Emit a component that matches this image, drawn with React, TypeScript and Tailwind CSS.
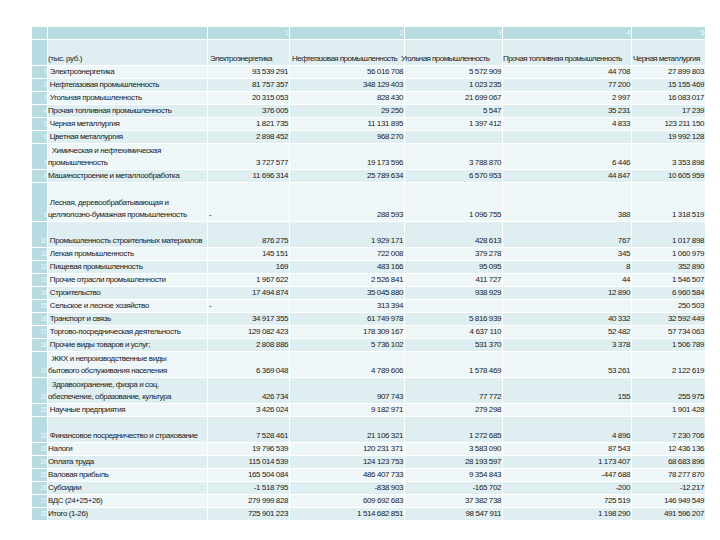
import React from 'react';

type Row = {
  n: number;
  label: string[];
  values: string[];
  units?: 1 | 2 | 3;
};

const rows: Row[] = [
  { n: 1, label: [' Электроэнергетика'], values: ['93 539 291', '56 016 708', '5 572 909', '44 708', '27 899 803'] },
  { n: 2, label: [' Нефтегазовая промышленность'], values: ['81 757 357', '348 129 403', '1 023 235', '77 200', '15 155 469'] },
  { n: 3, label: [' Угольная промышленность'], values: ['20 315 053', '828 430', '21 699 067', '2 997', '16 083 017'] },
  { n: 4, label: ['Прочая топливная промышленность'], values: ['376 005', '29 250', '5 547', '35 231', '17 239'] },
  { n: 5, label: [' Черная металлургия'], values: ['1 821 735', '11 131 895', '1 397 412', '4 833', '123 211 150'] },
  { n: 6, label: [' Цветная металлургия'], values: ['2 898 452', '968 270', '', '', '19 992 128'] },
  { n: 7, label: ['  Химическая и нефтехимическая', 'промышленность'], values: ['3 727 577', '19 173 596', '3 788 870', '6 446', '3 353 898'], units: 2 },
  { n: 8, label: ['Машиностроение и металлообработка'], values: ['11 696 314', '25 789 634', '6 570 953', '44 847', '10 605 959'] },
  { n: 9, label: [' Лесная, деревообрабатывающая и', 'целлюлозно-бумажная промышленность'], values: ['-', '288 593', '1 096 755', '388', '1 318 519'], units: 3 },
  { n: 10, label: [' Промышленность строительных материалов'], values: ['876 275', '1 929 171', '428 613', '767', '1 017 898'], units: 2 },
  { n: 11, label: [' Легкая промышленность'], values: ['145 151', '722 008', '379 278', '345', '1 060 979'] },
  { n: 12, label: [' Пищевая промышленность'], values: ['169', '483 166', '95 095', '8', '352 890'] },
  { n: 13, label: [' Прочие отрасли промышленности'], values: ['1 967 622', '2 526 841', '411 727', '44', '1 546 507'] },
  { n: 14, label: [' Строительство'], values: ['17 494 874', '35 045 880', '938 929', '12 890', '6 960 584'] },
  { n: 15, label: [' Сельское и лесное хозяйство'], values: ['-', '313 394', '', '', '250 503'] },
  { n: 16, label: [' Транспорт и связь'], values: ['34 917 355', '61 749 978', '5 816 939', '40 332', '32 592 449'] },
  { n: 17, label: [' Торгово-посредническая деятельность'], values: ['129 082 423', '178 309 167', '4 637 110', '52 482', '57 734 063'] },
  { n: 18, label: [' Прочие виды товаров и услуг;'], values: ['2 808 886', '5 736 102', '531 370', '3 378', '1 506 789'] },
  { n: 19, label: ['  ЖКХ и непроизводственные виды', 'бытового обслуживания населения'], values: ['6 369 048', '4 789 606', '1 578 469', '53 261', '2 122 619'], units: 2 },
  { n: 20, label: ['  Здравоохранение, физра и соц.', 'обеспечение, образование, культура'], values: ['426 734', '907 743', '77 772', '155', '255 975'], units: 2 },
  { n: 21, label: [' Научные предприятия'], values: ['3 426 024', '9 182 971', '279 298', '', '1 901 428'] },
  { n: 22, label: [' Финансовое посредничество и страхование'], values: ['7 528 461', '21 106 321', '1 272 685', '4 896', '7 230 706'], units: 2 },
  { n: 23, label: ['Налоги'], values: ['19 796 539', '120 231 371', '3 583 090', '87 543', '12 436 136'] },
  { n: 24, label: ['Оплата труда'], values: ['115 014 539', '124 123 753', '28 193 597', '1 173 407', '68 683 896'] },
  { n: 25, label: ['Валовая прибыль'], values: ['165 504 084', '486 407 733', '9 354 843', '-447 688', '78 277 870'] },
  { n: 26, label: ['Субсидии'], values: ['-1 518 795', '-838 903', '-165 702', '-200', '-12 217'] },
  { n: 27, label: ['ВДС (24+25+26)'], values: ['279 999 828', '609 692 683', '37 382 738', '725 519', '146 949 549'] },
  { n: 28, label: ['Итого (1-26)'], values: ['725 901 223', '1 514 682 851', '98 547 911', '1 198 290', '491 596 207'] },
];

const heights = { 1: 'h-[12px]', 2: 'h-[25px]', 3: 'h-[38px]' };
const grid = 'grid grid-cols-[15px_159px_81px_114px_97px_128px_73px] gap-x-px';
const teal = 'bg-[#b8dbe1]';

export default function App() {
  return (
    <div
      className="min-h-[540px] w-[720px] bg-white pl-[32px] pt-[27px] text-[8px] leading-[12px] tracking-[-0.4px] text-[#1c1c1c]"
      style={{ fontFamily: '"Liberation Sans", Arial, sans-serif' }}
    >
      <div className="flex w-[673px] flex-col gap-y-px">
        {/* column numbers */}
        <div className={`${grid} h-[12px]`}>
          <div className={teal} />
          <div className={teal} />
          {['1', '2', '3', '4', '5'].map((n) => (
            <div key={n} className={`${teal} flex items-end justify-end pb-[1px] pr-[1px] text-[7px] leading-[10px] text-[#eef7f8]`}>
              {n}
            </div>
          ))}
        </div>

        {/* column titles */}
        <div className={`${grid} h-[25px] whitespace-nowrap tracking-[-0.55px]`}>
          <div className={teal} />
          <div className="flex items-end bg-[#deeef1] tracking-[-0.4px]">(тыс. руб.)</div>
          <div className="flex items-end bg-[#deeef1] pl-[2px]">Электроэнергетика</div>
          <div className="flex items-end bg-[#deeef1] pl-[2px]">Нефтегазовая промышленность</div>
          <div className="flex items-end bg-[#deeef1]">
            <span className="-ml-[4px]">Угольная промышленность</span>
          </div>
          <div className="flex items-end bg-[#deeef1]">Прочая топливная промышленность</div>
          <div className="flex items-end bg-[#deeef1] pl-[1px]">Черная металлургия</div>
        </div>

        {rows.map((r) => {
          const band = r.n % 2 === 1 ? 'bg-[#eef6f8]' : 'bg-[#deeef1]';
          return (
            <div key={r.n} className={`${grid} ${heights[r.units ?? 1]}`}>
              <div className={`${teal} flex items-end justify-end text-[7px] tracking-[-0.6px] text-[#eef7f8]`}>
                {r.n}
              </div>
              <div className={`${band} flex flex-col justify-end whitespace-pre`}>
                {r.label.map((l, i) => (
                  <span key={i}>{l}</span>
                ))}
              </div>
              {r.values.map((v, i) => (
                <div
                  key={i}
                  className={`${band} flex items-end whitespace-nowrap ${v === '-' ? 'justify-start pl-[1px]' : 'justify-end pr-[1px]'}`}
                >
                  {v}
                </div>
              ))}
            </div>
          );
        })}
      </div>
    </div>
  );
}
